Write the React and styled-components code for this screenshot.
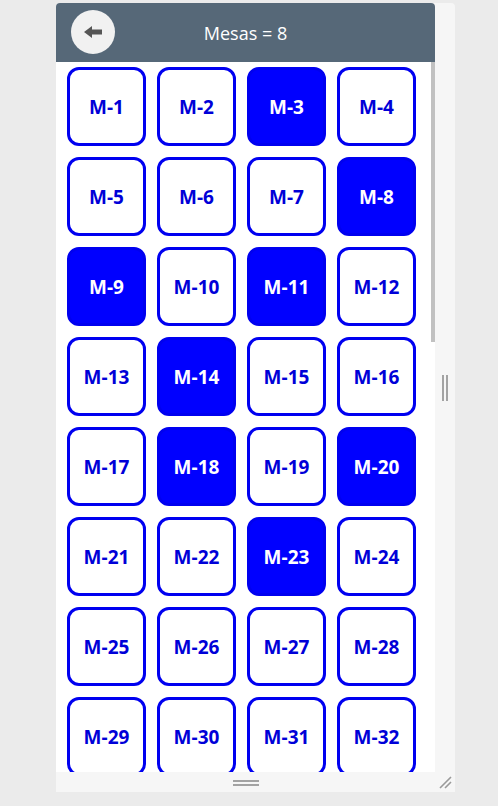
import React, { useEffect, useRef, useState } from "react";
import styled, { createGlobalStyle } from "styled-components";

const GlobalStyle = createGlobalStyle`
  html, body {
    margin: 0;
    padding: 0;
    background: #ebebeb;
    font-family: "Open Sans", "Liberation Sans", sans-serif;
  }
`;

const Frame = styled.div`
  margin: 3px 0 0 56px;
  width: 399px;
  display: grid;
  grid-template-columns: 379px 20px;
  grid-template-rows: 769px 20px;
  background: #f6f6f6;
  border-radius: 4px 4px 0 0;
`;

const Screen = styled.div`
  display: flex;
  flex-direction: column;
  background: #fff;
  border-radius: 4px 4px 0 0;
  overflow: hidden;
`;

const Header = styled.div`
  height: 59px;
  flex-shrink: 0;
  background: #566878;
  display: flex;
  align-items: center;
  position: relative;
  justify-content: center;
  color: #fff;
  font-size: 18px;
`;

const BackButton = styled.button`
  position: absolute;
  left: 15px;
  top: 7px;
  width: 44px;
  height: 44px;
  border-radius: 50%;
  border: none;
  background: #f1f1f1;
  display: flex;
  align-items: center;
  justify-content: center;
  padding: 0;
  cursor: pointer;
`;

const Title = styled.span`
  line-height: 1;
`;

const ScrollArea = styled.div`
  flex: 1;
  min-height: 0;
  display: flex;
`;

const Scroller = styled.div`
  flex: 1;
  overflow-y: auto;
  scrollbar-width: none;
  &::-webkit-scrollbar {
    display: none;
  }
`;

const Track = styled.div`
  width: 4px;
  flex-shrink: 0;
  background: #fff;
`;

const Thumb = styled.div`
  width: 4px;
  background: #c1c1c1;
`;

const Grid = styled.div`
  display: grid;
  grid-template-columns: repeat(4, 79px);
  grid-auto-rows: 79px;
  gap: 11px;
  padding: 5px 0 6px 11px;
`;

const Table = styled.button`
  box-sizing: border-box;
  border: 3px solid #0000f0;
  border-radius: 12px;
  background: ${(p) => (p.$busy ? "#0000ff" : "#fff")};
  color: ${(p) => (p.$busy ? "#fff" : "#0000d8")};
  font-family: "Open Sans", "Liberation Sans", sans-serif;
  font-weight: 700;
  font-size: 19px;
  padding: 0;
  cursor: pointer;
`;

const SideGrip = styled.div`
  display: flex;
  align-items: flex-start;
  justify-content: center;
  padding-top: 372px;
  gap: 2px;
  span {
    width: 2px;
    height: 26px;
    background: #a3a3a3;
  }
`;

const BottomGrip = styled.div`
  display: flex;
  flex-direction: column;
  align-items: center;
  padding-top: 8px;
  gap: 2px;
  span {
    width: 26px;
    height: 2px;
    background: #a3a3a3;
  }
`;

const Corner = styled.div`
  display: flex;
  align-items: flex-end;
  justify-content: flex-end;
  padding: 0 3px 3px 0;
`;

const BUSY = [3, 8, 9, 11, 14, 18, 20, 23];

export default function App() {
  const [busy, setBusy] = useState(BUSY);
  const [bar, setBar] = useState({ top: 0, height: 0 });
  const scroller = useRef(null);
  const tables = [...Array(80)].map((_, i) => i + 1);

  const measure = () => {
    const el = scroller.current;
    if (!el) return;
    const ratio = el.clientHeight / el.scrollHeight;
    setBar({
      top: el.scrollTop * ratio,
      height: Math.min(1, ratio) * el.clientHeight,
    });
  };

  useEffect(measure, []);

  const toggle = (n) =>
    setBusy((b) => (b.includes(n) ? b.filter((x) => x !== n) : [...b, n]));

  return (
    <>
      <GlobalStyle />
      <Frame>
        <Screen>
          <Header>
            <BackButton type="button" aria-label="Voltar">
              <svg width="19" height="12" viewBox="0 0 19 12">
                <path d="M0 6 L8 0 L8 3.6 L18 3.6 L18 8.4 L8 8.4 L8 12 Z" fill="#555" />
              </svg>
            </BackButton>
            <Title>Mesas = {busy.length}</Title>
          </Header>
          <ScrollArea>
            <Scroller ref={scroller} onScroll={measure}>
              <Grid>
                {tables.map((n) => (
                  <Table
                    type="button"
                    key={n}
                    $busy={busy.includes(n)}
                    onClick={() => toggle(n)}
                  >
                    M-{n}
                  </Table>
                ))}
              </Grid>
            </Scroller>
            <Track>
              <Thumb style={{ marginTop: bar.top, height: bar.height }} />
            </Track>
          </ScrollArea>
        </Screen>
        <SideGrip>
          <span />
          <span />
        </SideGrip>
        <BottomGrip>
          <span />
          <span />
        </BottomGrip>
        <Corner>
          <svg width="14" height="14" viewBox="0 0 14 14">
            <path d="M2 13 L13 2 M7 13 L13 7" stroke="#9a9a9a" strokeWidth="1.6" />
          </svg>
        </Corner>
      </Frame>
    </>
  );
}
